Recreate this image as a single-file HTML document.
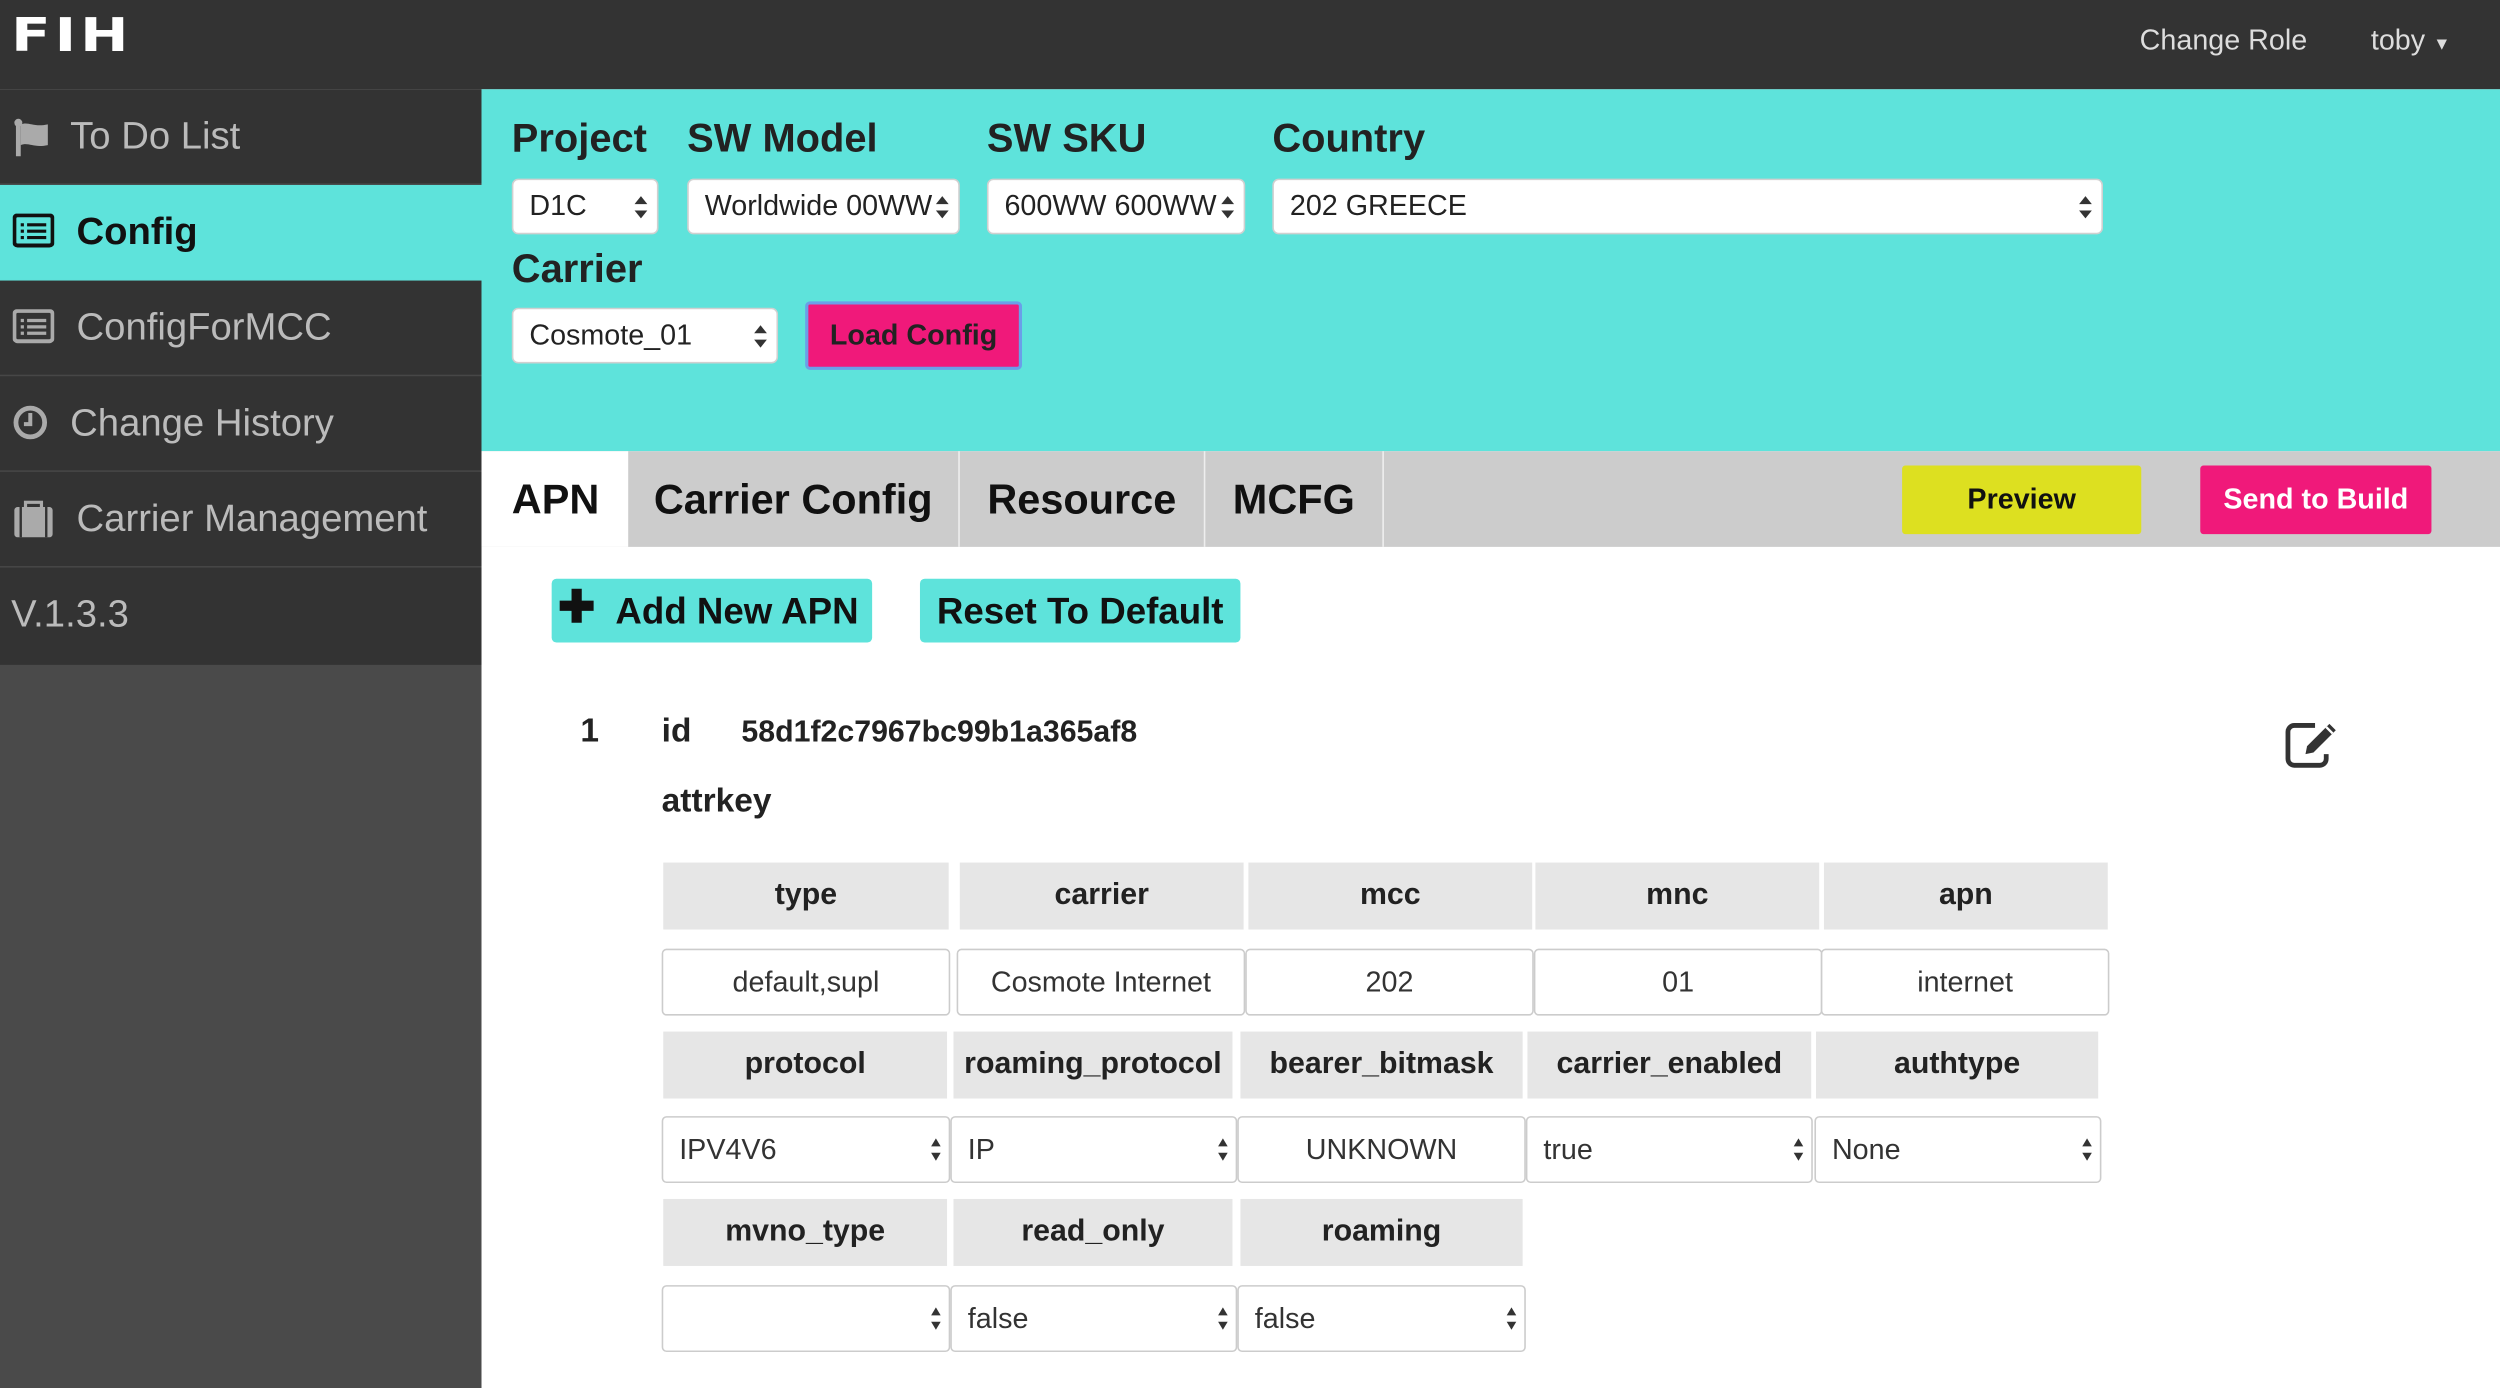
<!DOCTYPE html>
<html><head><meta charset="utf-8"><style>
*{box-sizing:border-box;margin:0;padding:0}
html,body{width:2500px;height:1388px;overflow:hidden;background:#fff}
#w{width:1568px;height:871px;transform:scale(1.59439);transform-origin:0 0;position:relative;font-family:"Liberation Sans",Arial,sans-serif;color:#111}
.a{position:absolute}
.top{left:0;top:0;width:1568px;height:56px;background:#333}
.side{left:0;top:56px;width:302px;height:815px;background:#4a4a4a}
.it{position:absolute;left:0;width:302px;height:60px;background:#333;border-bottom:1px solid #474747;color:#bbb;font-size:24px;line-height:59px}
.it svg{position:absolute;left:8px;top:18px}
.it span{position:absolute;left:48px}
.cy{left:302px;top:56px;width:1266px;height:227px;background:#5ee3db}
.lb{font-size:25px;font-weight:bold;color:#222}
.sel{position:absolute;background:#fff;border:1px solid #d0d0d0;border-radius:4px;height:35px;font-size:18px;line-height:33px;padding-left:10px;color:#222}
.sel:after{content:"";position:absolute;right:6px;top:10px;border:4px solid transparent;border-bottom:5px solid #333;border-top:0}
.sel:before{content:"";position:absolute;right:6px;top:19px;border:4px solid transparent;border-top:5px solid #333;border-bottom:0}
.tabs{left:302px;top:283px;width:1266px;height:60px;background:#ccc}
.tab{position:absolute;top:283px;height:60px;line-height:60px;font-size:26px;font-weight:bold;text-align:center;border-right:1px solid #eee;color:#111}
.btn{position:absolute;background:#5ee3db;border-radius:3px;font-size:23px;font-weight:bold;text-align:center;line-height:40px;color:#111}
.h{position:absolute;height:42px;background:#e6e6e6;font-size:19px;font-weight:bold;text-align:center;line-height:42px;color:#222}
.c{position:absolute;height:42px;border:1px solid #ccc;border-radius:3px;font-size:18px;text-align:center;line-height:40px;color:#333;background:#fff}
.s{position:absolute;height:42px;border:1px solid #ccc;border-radius:3px;font-size:18px;line-height:40px;padding-left:10px;color:#333;background:#fff}
.s:after{content:"";position:absolute;right:5px;top:13px;border:3.5px solid transparent;border-bottom:5px solid #333;border-top:0}
.s:before{content:"";position:absolute;right:5px;top:22px;border:3.5px solid transparent;border-top:5px solid #333;border-bottom:0}
</style></head><body><div id="w">
<div class="a top"></div>
<div class="a" style="left:7px;top:5px;font-size:29px;font-weight:900;color:#fff;letter-spacing:2px;transform:scaleX(1.25);transform-origin:0 0;font-family:'DejaVu Sans',sans-serif">FIH</div>
<div class="a" style="left:1342px;top:15px;font-size:18px;color:#ddd">Change Role</div>
<div class="a" style="left:1487px;top:15px;font-size:18px;color:#ddd">toby <span style="font-size:11px">▼</span></div>
<div class="a side"></div>
<div class="it" style="top:56px"><svg width="24" height="26" viewBox="0 0 24 26"><rect x="2" y="2" width="3" height="22" fill="#aaa"/><circle cx="3.5" cy="3" r="2.5" fill="#aaa"/><path d="M5 4c5-2 8 2 17 0v13c-9 2-12-2-17 0z" fill="#aaa"/></svg><span style="left:44px">To Do List</span></div>
<div class="it" style="top:116px;background:#5ee3db;color:#111;font-weight:bold;border-color:#5ee3db"><svg width="26" height="22" viewBox="0 0 26 22"><rect x="1" y="1" width="24" height="19" rx="2" fill="none" stroke="#111" stroke-width="2.5"/><path d="M5 7h2M9 7h12M5 11h2M9 11h12M5 15h2M9 15h12" stroke="#111" stroke-width="2"/></svg><span>Config</span></div>
<div class="it" style="top:176px"><svg width="26" height="22" viewBox="0 0 26 22"><rect x="1" y="1" width="24" height="19" rx="2" fill="none" stroke="#aaa" stroke-width="2.5"/><path d="M5 7h2M9 7h12M5 11h2M9 11h12M5 15h2M9 15h12" stroke="#aaa" stroke-width="2"/></svg><span>ConfigForMCC</span></div>
<div class="it" style="top:236px"><svg width="24" height="24" viewBox="0 0 24 24"><circle cx="11" cy="11" r="9" fill="none" stroke="#aaa" stroke-width="3"/><path d="M11 5v7H7" fill="none" stroke="#aaa" stroke-width="2.5"/></svg><span style="left:44px">Change History</span></div>
<div class="it" style="top:296px"><svg width="26" height="24" viewBox="0 0 26 24"><path d="M8 4V1h10v3" fill="none" stroke="#aaa" stroke-width="2"/><rect x="1" y="4" width="24" height="19" rx="2" fill="#aaa"/><path d="M5 4v19M21 4v19" stroke="#333" stroke-width="1.5"/></svg><span>Carrier Management</span></div>
<div class="it" style="top:356px;border:0;height:61px"><span style="left:7px">V.1.3.3</span></div>
<div class="a cy"></div>
<div class="a lb" style="left:321px;top:73px">Project</div>
<div class="a lb" style="left:431px;top:73px">SW Model</div>
<div class="a lb" style="left:619px;top:73px">SW SKU</div>
<div class="a lb" style="left:798px;top:73px">Country</div>
<div class="a lb" style="left:321px;top:155px">Carrier</div>
<div class="sel" style="left:321px;top:112px;width:92px">D1C</div>
<div class="sel" style="left:431px;top:112px;width:171px">Worldwide 00WW</div>
<div class="sel" style="left:619px;top:112px;width:162px">600WW 600WW</div>
<div class="sel" style="left:798px;top:112px;width:521px">202 GREECE</div>
<div class="sel" style="left:321px;top:193px;width:167px">Cosmote_01</div>
<div class="a" style="left:505px;top:189px;width:136px;height:43px;background:#f0197a;border:2px solid #6a9fe8;border-radius:3px;font-size:18px;font-weight:bold;line-height:39px;text-align:center;color:#222">Load Config</div>
<div class="a tabs"></div>
<div class="tab" style="left:302px;width:92px;background:#fff;text-align:left;padding-left:19px;border:0">APN</div>
<div class="tab" style="left:394px;width:208px">Carrier Config</div>
<div class="tab" style="left:602px;width:154px">Resource</div>
<div class="tab" style="left:756px;width:112px">MCFG</div>
<div class="a" style="left:1193px;top:292px;width:150px;height:43px;background:#dde020;border-radius:2px;font-size:18px;font-weight:bold;text-align:center;line-height:43px">Preview</div>
<div class="a" style="left:1380px;top:292px;width:145px;height:43px;background:#f0197a;border-radius:2px;font-size:18px;font-weight:bold;text-align:center;line-height:43px;color:#fff">Send to Build</div>
<div class="btn" style="left:346px;top:363px;width:201px;text-align:left;padding-left:40px"><span style="position:absolute;left:4px;top:-2px;font-size:28px">✚</span>Add New APN</div>
<div class="btn" style="left:577px;top:363px;width:201px">Reset To Default</div>
<div class="a" style="left:364px;top:447px;font-size:21px;font-weight:bold;color:#222">1</div>
<div class="a" style="left:415px;top:447px;font-size:21px;font-weight:bold;color:#222">id</div>
<div class="a" style="left:465px;top:449px;font-size:19px;font-weight:bold;color:#222">58d1f2c7967bc99b1a365af8</div>
<div class="a" style="left:415px;top:491px;font-size:21px;font-weight:bold;color:#222">attrkey</div>
<svg class="a" style="left:1432px;top:451px" width="38" height="32" viewBox="0 0 38 32"><path d="M20 4H7a4 4 0 0 0-4 4v17a4 4 0 0 0 4 4h16a4 4 0 0 0 4-4v-3" fill="none" stroke="#333" stroke-width="3"/><path d="M29 3l4 4-14 14-5 1 1-5z" fill="#333"/><path d="M27 5l4 4" stroke="#fff" stroke-width="1.5"/></svg>
<div class="h" style="left:416px;top:541px;width:179px">type</div>
<div class="h" style="left:602px;top:541px;width:178px">carrier</div>
<div class="h" style="left:783px;top:541px;width:178px">mcc</div>
<div class="h" style="left:963px;top:541px;width:178px">mnc</div>
<div class="h" style="left:1144px;top:541px;width:178px">apn</div>
<div class="c" style="left:415px;top:595px;width:181px">default,supl</div>
<div class="c" style="left:600px;top:595px;width:181px">Cosmote Internet</div>
<div class="c" style="left:781px;top:595px;width:181px">202</div>
<div class="c" style="left:962px;top:595px;width:181px">01</div>
<div class="c" style="left:1142px;top:595px;width:181px">internet</div>
<div class="h" style="left:416px;top:647px;width:178px">protocol</div>
<div class="h" style="left:598px;top:647px;width:175px">roaming_protocol</div>
<div class="h" style="left:778px;top:647px;width:177px">bearer_bitmask</div>
<div class="h" style="left:958px;top:647px;width:178px">carrier_enabled</div>
<div class="h" style="left:1139px;top:647px;width:177px">authtype</div>
<div class="s" style="left:415px;top:700px;width:181px">IPV4V6</div>
<div class="s" style="left:596px;top:700px;width:180px">IP</div>
<div class="c" style="left:776px;top:700px;width:181px">UNKNOWN</div>
<div class="s" style="left:957px;top:700px;width:180px">true</div>
<div class="s" style="left:1138px;top:700px;width:180px">None</div>
<div class="h" style="left:416px;top:752px;width:178px">mvno_type</div>
<div class="h" style="left:598px;top:752px;width:175px">read_only</div>
<div class="h" style="left:778px;top:752px;width:177px">roaming</div>
<div class="s" style="left:415px;top:806px;width:181px"></div>
<div class="s" style="left:596px;top:806px;width:180px">false</div>
<div class="s" style="left:776px;top:806px;width:181px">false</div>
</div></body></html>
